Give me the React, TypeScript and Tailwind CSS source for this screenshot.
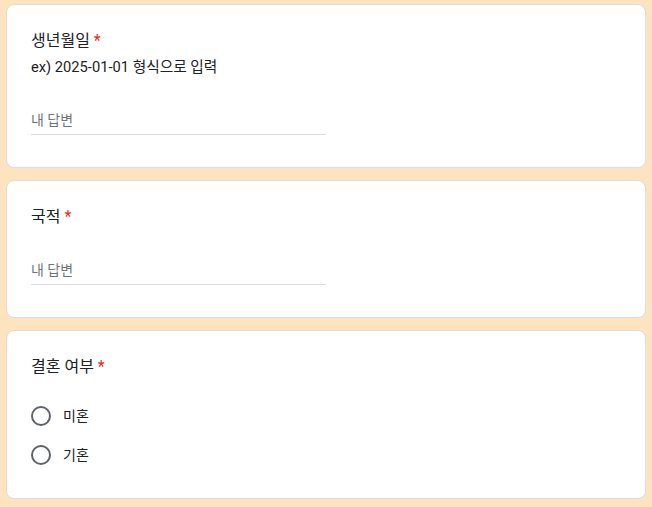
const font = { fontFamily: 'Roboto, "Noto Sans CJK KR", "Noto Sans", sans-serif' };

function Title({ text }: { text: string }) {
  return (
    <div className="text-base leading-6 text-[#202124]">
      {text} <span className="text-[#d93025]">*</span>
    </div>
  );
}

function TextAnswer({ className }: { className: string }) {
  return (
    <div className={`w-1/2 border-b border-[#dadce0] pb-1 ${className}`}>
      <div className="text-sm leading-5 text-[#70757a]">내 답변</div>
    </div>
  );
}

function Radio({ label }: { label: string }) {
  return (
    <div className="flex h-[39px] items-center gap-3">
      <div className="h-5 w-5 rounded-full border-2 border-[#5f6368]" />
      <span className="text-sm leading-5 text-[#202124]">{label}</span>
    </div>
  );
}

export default function App() {
  return (
    <div className="min-h-screen bg-[#fee3c1] pt-[4px]" style={font}>
      <div className="mx-auto flex w-[640px] flex-col gap-3">
        <div className="rounded-lg border border-[#dadce0] bg-white px-6 pt-6 pb-8">
          <Title text="생년월일" />
          <div className="mt-1 text-[14.7px] leading-5 text-[#202124]">
            ex) 2025-01-01 형식으로 입력
          </div>
          <TextAnswer className="mt-[33px]" />
        </div>

        <div className="rounded-lg border border-[#dadce0] bg-white px-6 pt-6 pb-8">
          <Title text="국적" />
          <TextAnswer className="mt-[31px]" />
        </div>

        <div className="rounded-lg border border-[#dadce0] bg-white px-6 pt-6 pb-6">
          <Title text="결혼 여부" />
          <div className="mt-[17px]">
            <Radio label="미혼" />
            <Radio label="기혼" />
          </div>
        </div>
      </div>
    </div>
  );
}
